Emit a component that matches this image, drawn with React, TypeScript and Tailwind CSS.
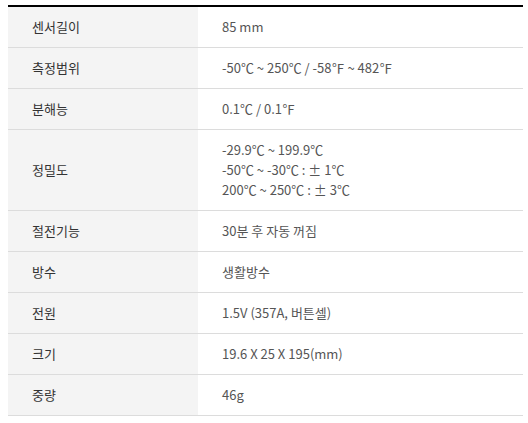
const specs: { label: string; value: string[] }[] = [
  { label: "센서길이", value: ["85 mm"] },
  { label: "측정범위", value: ["-50℃ ~ 250℃ / -58℉ ~ 482℉"] },
  { label: "분해능", value: ["0.1℃ / 0.1℉"] },
  { label: "정밀도", value: ["-29.9℃ ~ 199.9℃", "-50℃ ~ -30℃ : ± 1℃", "200℃ ~ 250℃ : ± 3℃"] },
  { label: "절전기능", value: ["30분 후 자동 꺼짐"] },
  { label: "방수", value: ["생활방수"] },
  { label: "전원", value: ["1.5V (357A, 버튼셀)"] },
  { label: "크기", value: ["19.6 X 25 X 195(mm)"] },
  { label: "중량", value: ["46g"] },
]

export default function App() {
  return (
    <div className="bg-white min-h-[423px] pt-[5px] px-2 font-['Noto_Sans_CJK_KR','Noto_Sans',sans-serif]">
      <table className="w-[515px] border-collapse border-t-2 border-black text-[13px] leading-5">
        <tbody>
          {specs.map((row) => (
            <tr key={row.label} className="border-b border-[#dcdcdc]">
              <th className="w-[190px] bg-[#f4f4f4] py-[10px] pl-6 text-left font-normal text-[#333]">
                {row.label}
              </th>
              <td className="py-[10px] pl-6 text-[#555]">
                {row.value.map((v) => (
                  <div key={v}>{v}</div>
                ))}
              </td>
            </tr>
          ))}
        </tbody>
      </table>
    </div>
  )
}
